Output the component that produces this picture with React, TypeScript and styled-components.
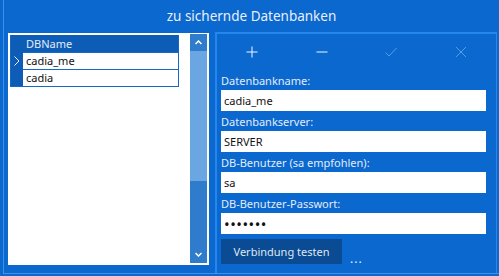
import { Fragment } from 'react';
import styled, { createGlobalStyle } from 'styled-components';

const GlobalStyle = createGlobalStyle`
  html, body {
    margin: 0;
    padding: 0;
    background: #0a68cf;
  }
  body {
    font-family: 'Noto Sans', 'Open Sans', sans-serif;
  }
`;

const StyledWindow = styled.div`
  width: 499px;
  height: 276px;
  box-sizing: border-box;
  background: #0a68cf;
  overflow: hidden;
`;

const StyledFrame = styled.div`
  margin-left: 3px;
  width: 496px;
  height: 274px;
  box-sizing: border-box;
  border-left: 1px solid #3d92e8;
  border-bottom: 1px solid #3d92e8;
  display: flex;
  flex-direction: column;
`;

const StyledTitle = styled.div`
  height: 32px;
  line-height: 33px;
  text-align: center;
  color: #e9eff8;
  font-size: 13.5px;
`;

const StyledBody = styled.div`
  display: flex;
  align-items: flex-start;
  gap: 6px;
  padding-left: 4px;
`;

const StyledListPanel = styled.div`
  margin-top: 1px;
  width: 201px;
  height: 232px;
  box-sizing: border-box;
  background: #ffffff;
  padding: 1px 2px 2px 2px;
  display: flex;
  justify-content: space-between;
`;

const StyledGrid = styled.div`
  margin-top: 1px;
  width: 167px;
  display: grid;
  grid-template-columns: 12px 1fr;
  grid-auto-rows: 17px;
  align-self: flex-start;
  border: 1px solid #1469c8;
  border-top: none;
  font-size: 11px;
`;

const StyledRowHeader = styled.div`
  background: #0d5cb6;
  color: #e6eef9;
  display: flex;
  align-items: center;
  justify-content: center;
`;

const StyledHeaderCell = styled.div`
  background: #0d5cb6;
  color: #e3ecf8;
  padding-left: 3px;
  line-height: 17px;
`;

const StyledCell = styled.div`
  background: #ffffff;
  color: #111111;
  padding-left: 3px;
  line-height: 16px;
  border-top: 1px solid #1469c8;
`;

const StyledScrollbar = styled.div`
  width: 17px;
  display: flex;
  flex-direction: column;
  background: #2e7ccb;
`;

const StyledScrollButton = styled.div`
  height: 17px;
  display: flex;
  align-items: center;
  justify-content: center;
`;

const StyledThumb = styled.div`
  height: 130px;
  background: #6aa6e2;
`;

const StyledTrack = styled.div`
  flex: 1;
`;

const StyledEditPanel = styled.div`
  width: 282px;
  height: 241px;
  box-sizing: border-box;
  border: 2px solid #2587ee;
  border-bottom: none;
  border-right-width: 1px;
  padding: 0 8px 0 4px;
  display: flex;
  flex-direction: column;
`;

const StyledToolbar = styled.div`
  height: 36px;
  margin: 0 -8px 0 -4px;
  display: grid;
  grid-template-columns: repeat(4, 1fr);
  align-items: center;
  justify-items: center;
`;

const StyledToolButton = styled.div<{ $disabled?: boolean }>`
  width: 12px;
  height: 12px;
  display: flex;
  color: ${(p) => (p.$disabled ? '#5a9ce4' : '#f2f6fc')};
`;

const StyledField = styled.div`
  display: flex;
  flex-direction: column;
`;

const StyledLabel = styled.label`
  height: 20px;
  line-height: 22px;
  font-size: 11px;
  color: #e4ecf8;
`;

const StyledInput = styled.input<{ $secret?: boolean }>`
  height: 21px;
  width: 265px;
  box-sizing: border-box;
  border: none;
  outline: none;
  margin: 0;
  padding: 0 0 0 3px;
  background: #ffffff;
  font-family: 'Noto Sans', 'Open Sans', sans-serif;
  font-size: ${(p) => (p.$secret ? '15px' : '11px')};
  letter-spacing: ${(p) => (p.$secret ? '0.5px' : '0')};
  color: #111111;
`;

const StyledActions = styled.div`
  margin-top: 5px;
  display: flex;
  align-items: flex-end;
  gap: 8px;
`;

const StyledButton = styled.button`
  width: 121px;
  height: 25px;
  border: none;
  margin: 0;
  padding: 0;
  background: #0b4b93;
  color: #dfe7f3;
  font-family: 'Noto Sans', 'Open Sans', sans-serif;
  font-size: 11px;
`;

const StyledMore = styled.span`
  color: #e4ecf8;
  font-size: 12px;
  line-height: 10px;
  letter-spacing: 1px;
`;

const fields = [
  { label: 'Datenbankname:', value: 'cadia_me', type: 'text' },
  { label: 'Datenbankserver:', value: 'SERVER', type: 'text' },
  { label: 'DB-Benutzer (sa empfohlen):', value: 'sa', type: 'text' },
  { label: 'DB-Benutzer-Passwort:', value: 'geheim1', type: 'password' },
];

const databases = ['cadia_me', 'cadia'];

function Icon({ d }: { d: string }) {
  return (
    <svg width="12" height="12" viewBox="0 0 12 12" fill="none">
      <path d={d} stroke="currentColor" strokeWidth="1" />
    </svg>
  );
}

function App() {
  return (
    <StyledWindow>
      <GlobalStyle />
      <StyledFrame>
        <StyledTitle>zu sichernde Datenbanken</StyledTitle>
        <StyledBody>
          <StyledListPanel>
            <StyledGrid>
              <StyledRowHeader />
              <StyledHeaderCell>DBName</StyledHeaderCell>
              {databases.map((name, i) => (
                <Fragment key={name}>
                  <StyledRowHeader>
                    {i === 0 && (
                      <svg width="6" height="10" viewBox="0 0 6 10">
                        <path d="M0.5 0.5 L5 5 L0.5 9.5" stroke="#e8f0fb" fill="none" />
                      </svg>
                    )}
                  </StyledRowHeader>
                  <StyledCell>{name}</StyledCell>
                </Fragment>
              ))}
            </StyledGrid>
            <StyledScrollbar>
              <StyledScrollButton>
                <svg width="7" height="5" viewBox="0 0 7 5">
                  <path d="M0.5 4 L3.5 1 L6.5 4" stroke="#ffffff" strokeWidth="1.5" fill="none" />
                </svg>
              </StyledScrollButton>
              <StyledThumb />
              <StyledTrack />
              <StyledScrollButton>
                <svg width="7" height="5" viewBox="0 0 7 5">
                  <path d="M0.5 1 L3.5 4 L6.5 1" stroke="#ffffff" strokeWidth="1.5" fill="none" />
                </svg>
              </StyledScrollButton>
            </StyledScrollbar>
          </StyledListPanel>
          <StyledEditPanel>
            <StyledToolbar>
              <StyledToolButton>
                <Icon d="M6 0.5 V11.5 M0.5 6 H11.5" />
              </StyledToolButton>
              <StyledToolButton>
                <Icon d="M0.5 6 H11.5" />
              </StyledToolButton>
              <StyledToolButton $disabled>
                <Icon d="M0.5 6.5 L4 10 L11.5 2" />
              </StyledToolButton>
              <StyledToolButton $disabled>
                <Icon d="M1 1 L11 11 M11 1 L1 11" />
              </StyledToolButton>
            </StyledToolbar>
            {fields.map((field) => (
              <StyledField key={field.label}>
                <StyledLabel>{field.label}</StyledLabel>
                <StyledInput
                  type={field.type}
                  defaultValue={field.value}
                  $secret={field.type === 'password'}
                  readOnly
                />
              </StyledField>
            ))}
            <StyledActions>
              <StyledButton>Verbindung testen</StyledButton>
              <StyledMore>...</StyledMore>
            </StyledActions>
          </StyledEditPanel>
        </StyledBody>
      </StyledFrame>
    </StyledWindow>
  );
}

export default App;
